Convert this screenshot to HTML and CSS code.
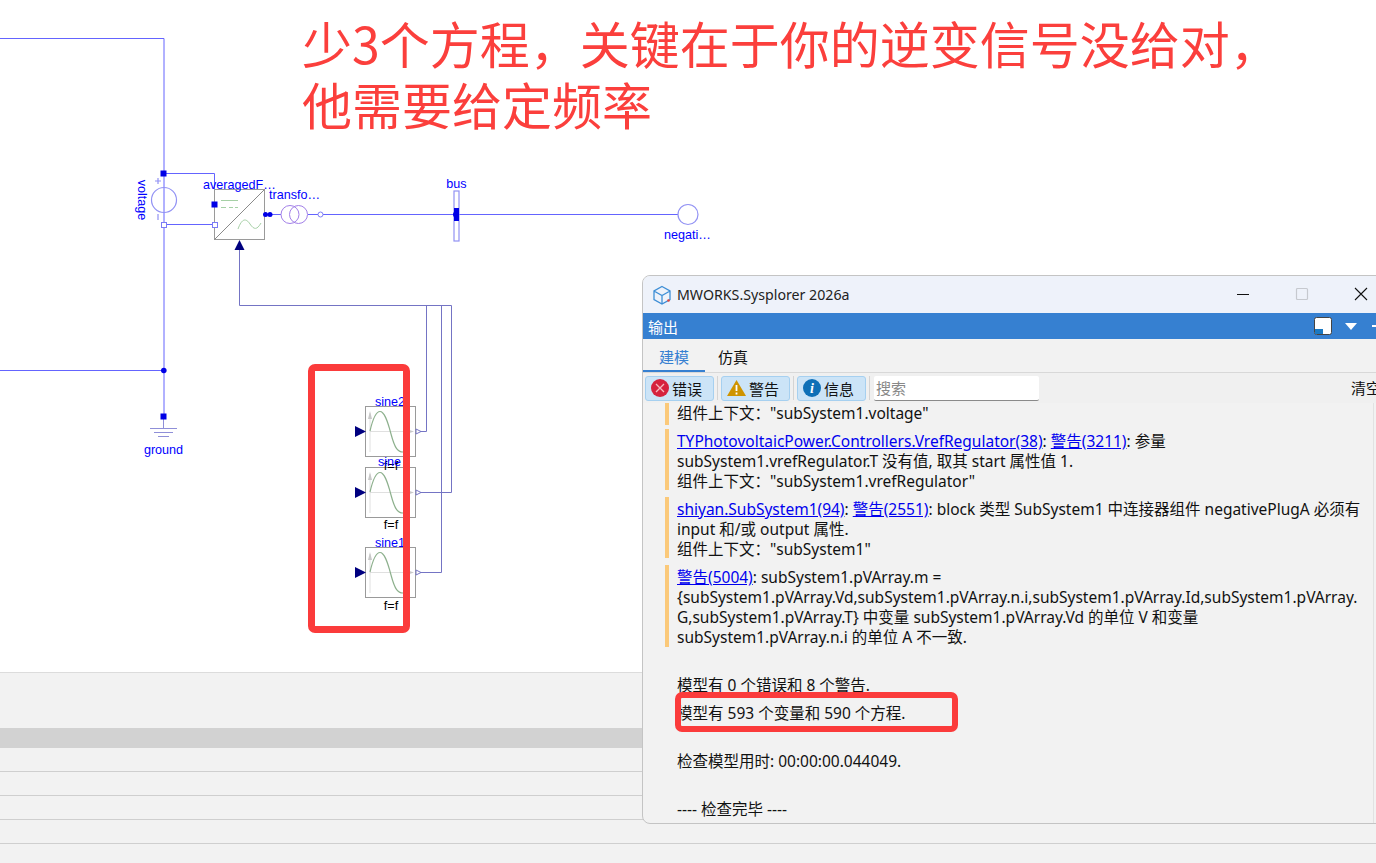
FILE: index.html
```
<!DOCTYPE html>
<html lang="zh-CN">
<head>
<meta charset="utf-8">
<title>MWORKS.Sysplorer</title>
<link rel="stylesheet" href="styles.css">
</head>
<body>
<main class="stage">
  <section class="canvas">
    <svg class="diagram" width="1376" height="672" viewBox="0 0 1376 672">
      <g class="wire">
        <path d="M0 38.500H164V416"/>
        <path d="M0 370.500H164"/>
        <path d="M164 173.500H214.500V204"/>
        <path d="M164 224.500H214.500"/>
        <path d="M265 214.500H281M308 214.500H318M322 214.500H678"/>
        <path d="M163.500 416V428M150 428.500H177M154 432.500H173M158 436.500H169" class="wire-light"/>
      </g>
      <g class="wire-signal">
        <path d="M239.500 250V305.500H451.500V492.500H418"/>
        <path d="M426.500 305V431.500H418"/>
        <path d="M441.500 305V572.500H418"/>
      </g>
      <circle class="sym" cx="164" cy="200" r="12.500"/>
      <path class="sym" d="M158 178v6M155 181h6M158 214v6"/>
      <rect class="dot" x="160.500" y="170.500" width="6" height="6"/>
      <circle class="dot" cx="163.800" cy="370.500" r="2.800"/>
      <rect class="dot" x="160.500" y="413.500" width="6" height="6"/>
      <rect class="port" x="161.500" y="222.500" width="5" height="5"/>

      <rect class="block" x="214.500" y="189.500" width="50" height="50"/>
      <path class="block-line" d="M214.500 239.500L264.500 189.500"/>
      <path class="green" d="M221 200.500H238M221 207.500H226M229 207.500H233M235 207.500H238"/>
      <path class="green" d="M238 229C242 218 246 218 250 224S257 230 261 223"/>
      <rect class="dot" x="211.500" y="201.500" width="6" height="6"/>
      <rect class="port" x="212.500" y="222.500" width="5" height="5"/>
      <path class="navy" d="M234.500 250L239.500 240L244.500 250Z"/>
      <circle class="dot" cx="265.500" cy="214.500" r="2.500"/>
      <circle class="dot" cx="270" cy="214.500" r="2.500"/>
      <circle class="coil" cx="290" cy="214.500" r="9"/>
      <circle class="coil" cx="298.500" cy="214.500" r="9"/>
      <circle class="port-round" cx="320.500" cy="214.500" r="2.500"/>

      <rect class="sym" x="454" y="191" width="5" height="50"/>
      <rect class="dot" x="454" y="208" width="5" height="13"/>
      <circle class="dot" cx="456" cy="214.500" r="3"/>
      <circle class="sym" cx="688" cy="214.500" r="10"/>

      <g class="sine" transform="translate(365 406)">
        <rect class="block" x="0.500" y="0.500" width="50" height="50"/>
        <path class="axis" d="M5 7V46M5 25.500H46"/>
        <path class="axis-head" d="M3 13L5 5L7 13ZM43 23.500L49 25.500L43 27.500Z"/>
        <path class="sine-curve" d="M5 25C8 12 11 5.500 15 5.500S22 13 26 28S33 46 38 46"/>
      </g>
      <g class="sine" transform="translate(365 467)">
        <rect class="block" x="0.500" y="0.500" width="50" height="50"/>
        <path class="axis" d="M5 7V46M5 25.500H46"/>
        <path class="axis-head" d="M3 13L5 5L7 13ZM43 23.500L49 25.500L43 27.500Z"/>
        <path class="sine-curve" d="M5 25C8 12 11 5.500 15 5.500S22 13 26 28S33 46 38 46"/>
      </g>
      <g class="sine" transform="translate(365 547)">
        <rect class="block" x="0.500" y="0.500" width="50" height="50"/>
        <path class="axis" d="M5 7V46M5 25.500H46"/>
        <path class="axis-head" d="M3 13L5 5L7 13ZM43 23.500L49 25.500L43 27.500Z"/>
        <path class="sine-curve" d="M5 25C8 12 11 5.500 15 5.500S22 13 26 28S33 46 38 46"/>
      </g>
      <path class="navy" d="M355 426L366 431.500L355 437Z"/>
      <path class="navy" d="M355 487L366 492.500L355 498Z"/>
      <path class="navy" d="M355 567L366 572.500L355 578Z"/>
      <path class="out" d="M416 429L421 431.500L416 434Z"/>
      <path class="out" d="M416 490L421 492.500L416 495Z"/>
      <path class="out" d="M416 570L421 572.500L416 575Z"/>

      <text class="lbl" x="163.500" y="454" text-anchor="middle">ground</text>
      <text class="lbl" transform="translate(138 200) rotate(90)" text-anchor="middle">voltage</text>
      <text class="lbl" x="203" y="189">averagedF…</text>
      <text class="lbl" x="269" y="199">transfo…</text>
      <text class="lbl" x="456.500" y="188" text-anchor="middle">bus</text>
      <text class="lbl" x="664" y="239">negati…</text>
      <text class="lbl" x="375" y="406">sine2</text>
      <text class="lbl-black" x="391" y="470" text-anchor="middle">f=f</text>
      <text class="lbl" x="378" y="466">sine</text>
      <text class="lbl-black" x="391" y="529" text-anchor="middle">f=f</text>
      <text class="lbl" x="375" y="547">sine1</text>
      <text class="lbl-black" x="391" y="610" text-anchor="middle">f=f</text>
    </svg>
    <p class="note">少3个方程，关键在于你的逆变信号没给对，<br>他需要给定频率</p>
    <div class="mark mark-sines"></div>
  </section>

  <section class="lower">
    <div class="band"></div>
    <div class="row"></div>
    <div class="row"></div>
    <div class="row"></div>
    <div class="row"></div>
  </section>

  <section class="window">
    <header class="titlebar">
      <svg class="logo" width="20" height="20" viewBox="0 0 20 20">
        <path d="M10 1.500L18 6V14.500L10 19L2 14.500V6ZM2 6L10 10.500L18 6M10 10.500V19"/>
        <circle cx="16.500" cy="15.500" r="1.300"/>
      </svg>
      <span class="app-name">MWORKS.Sysplorer 2026a</span>
      <span class="win-controls">
        <svg width="14" height="14" viewBox="0 0 14 14"><path class="ctl" d="M1 7.500H13"/></svg>
        <svg width="14" height="14" viewBox="0 0 14 14"><rect class="ctl-off" x="1.500" y="1.500" width="11" height="11" rx="1"/></svg>
        <svg width="14" height="14" viewBox="0 0 14 14"><path class="ctl" d="M1 1L13 13M13 1L1 13"/></svg>
      </span>
    </header>
    <div class="panelbar">
      <span>输出</span>
      <span class="panel-tools">
        <svg width="18" height="18" viewBox="0 0 18 18"><rect class="restore" x="0.500" y="0.500" width="17" height="17" rx="2"/><rect class="restore-in" x="1" y="12" width="8" height="5"/></svg>
        <svg width="12" height="7" viewBox="0 0 12 7"><path class="caret" d="M0 0H12L6 7Z"/></svg>
        <span class="panel-dash"></span>
      </span>
    </div>
    <nav class="tabs">
      <span class="tab tab-on">建模</span>
      <span class="tab">仿真</span>
    </nav>
    <div class="toolbar">
      <span class="tool">
        <svg width="18" height="18" viewBox="0 0 18 18"><circle class="i-err" cx="9" cy="9" r="9"/><path class="i-x" d="M5 5L13 13M13 5L5 13"/></svg>错误</span>
      <i class="sep"></i>
      <span class="tool">
        <svg width="19" height="18" viewBox="0 0 19 18"><path class="i-warn" d="M9.500 1L19 17H0Z"/><path class="i-bang" d="M9.500 6V12M9.500 13.500V15.500"/></svg>警告</span>
      <i class="sep"></i>
      <span class="tool">
        <svg width="18" height="18" viewBox="0 0 18 18"><circle class="i-info" cx="9" cy="9" r="9"/><text class="i-i" x="9" y="14" text-anchor="middle">i</text></svg>信息</span>
      <i class="sep"></i>
      <span class="search">搜索</span>
      <span class="clear">清空</span>
    </div>
    <div class="log">
      <div class="entry entry-first">组件上下文："subSystem1.voltage"</div>
      <div class="entry"><a>TYPhotovoltaicPower.Controllers.VrefRegulator(38)</a>: <a>警告(3211)</a>: 参量<br>subSystem1.vrefRegulator.T 没有值, 取其 start 属性值 1.<br>组件上下文："subSystem1.vrefRegulator"</div>
      <div class="entry"><a>shiyan.SubSystem1(94)</a>: <a>警告(2551)</a>: block 类型 SubSystem1 中连接器组件 negativePlugA 必须有<br>input 和/或 output 属性.<br>组件上下文："subSystem1"</div>
      <div class="entry"><a>警告(5004)</a>: subSystem1.pVArray.m =<br>{subSystem1.pVArray.Vd,subSystem1.pVArray.n.i,subSystem1.pVArray.Id,subSystem1.pVArray.<br>G,subSystem1.pVArray.T} 中变量 subSystem1.pVArray.Vd 的单位 V 和变量<br>subSystem1.pVArray.n.i 的单位 A 不一致.</div>
      <p class="msg msg-a">模型有 0 个错误和 8 个警告.</p>
      <p class="msg msg-b">模型有 593 个变量和 590 个方程.</p>
      <p class="msg msg-c">检查模型用时: 00:00:00.044049.</p>
      <p class="msg msg-c">---- 检查完毕 ----</p>
    </div>
    <div class="scroll-edge"></div>
    <div class="mark mark-eq"></div>
  </section>
</main>
</body>
</html>
```
FILE: styles.css
```
* { box-sizing: border-box; }
html, body { margin: 0; padding: 0; height: 863px; overflow: hidden; background: #f2f2f2; }
body { font-family: "Noto Sans", "Noto Sans CJK SC", sans-serif; }

.stage { position: relative; width: 1376px; height: 863px; overflow: hidden; }

.canvas { position: relative; height: 673px; background: #fff; border-bottom: 1px solid #dcdcdc; }
.diagram { display: block; }

.wire path { fill: none; stroke: #6464ff; stroke-width: 1; }
.wire .wire-light { stroke: #8f8fd8; stroke-width: 1; }
.wire-signal path { fill: none; stroke: #7474c4; stroke-width: 1; }
.sym { fill: none; stroke: #9292f4; stroke-width: 1.200; }
.dot { fill: #0000e6; }
.port { fill: #fff; stroke: #7c7cf6; stroke-width: 1; }
.port-round { fill: #fff; stroke: #7c7cf6; stroke-width: 1; }
.block { fill: #fff; stroke: #9a9a9a; stroke-width: 1; }
.block-line { fill: none; stroke: #8a8a8a; stroke-width: 1; }
.green { fill: none; stroke: #a6d0a6; stroke-width: 1; }
.navy { fill: #00007f; }
.coil { fill: none; stroke: #a27fe8; stroke-width: 1; }
.axis { fill: none; stroke: #e0e0e0; stroke-width: 1; }
.axis-head { fill: #c8c8c8; }
.sine-curve { fill: none; stroke: #8db08d; stroke-width: 1.200; }
.out { fill: #fff; stroke: #7474c4; stroke-width: 1; }
.lbl { font: 12.600px "Liberation Sans", Arial, sans-serif; fill: #0000ff; }
.lbl-black { font: 12.600px "Liberation Sans", Arial, sans-serif; fill: #000; }

.note {
  position: absolute; left: 302px; top: 12px; margin: 0;
  font: 400 50px/61px "Noto Sans CJK SC", sans-serif;
  color: #fb3f3c; white-space: nowrap;
}
.mark { position: absolute; border: 7px solid #fb3b3b; border-radius: 7px; }
.mark-sines { left: 308px; top: 364px; width: 102px; height: 269px; }

.lower { padding-top: 55px; }
.band { height: 20px; background: #d2d2d2; }
.row { height: 24px; border-bottom: 1px solid #cfcfcf; }

.window {
  position: absolute; left: 642px; top: 275px; width: 760px; height: 549px;
  background: #f2f2f2; border: 1px solid #c4c4c4; border-radius: 8px;
  overflow: hidden; display: flex; flex-direction: column;
  font-size: 15px; color: #111;
}
.titlebar { flex: 0 0 37px; background: #eef2fa; display: flex; align-items: center; padding-left: 9px; }
.logo { margin-right: 5px; }
.logo path { fill: none; stroke: #3f8fd6; stroke-width: 1.300; }
.logo circle { fill: #e2483d; }
.app-name { font-size: 14.200px; color: #222; }
.win-controls { position: absolute; left: 593px; top: 11px; width: 132px; display: flex; justify-content: space-between; }
.ctl { fill: none; stroke: #111; stroke-width: 1.100; }
.ctl-off { fill: none; stroke: #c6c9cf; stroke-width: 1.200; }

.panelbar { flex: 0 0 26px; background: #3680d1; color: #fff; display: flex; align-items: center; padding-left: 5px; position: relative; }
.panel-tools { position: absolute; left: 671px; top: 4px; display: flex; align-items: center; gap: 13px; }
.restore { fill: #fff; stroke: #444; stroke-width: 1; }
.restore-in { fill: #1a78c2; }
.caret { fill: #fff; }
.panel-dash { width: 10px; height: 1.500px; background: #fff; margin-left: 2px; }

.tabs { flex: 0 0 34px; display: flex; border-bottom: 1px solid #d8d8d8; }
.tab { width: 62px; text-align: center; line-height: 36px; color: #111; height: 33px; }
.tab-on { color: #3680d1; border-bottom: 2px solid #3680d1; }
.tab + .tab { width: 60px; margin-left: -2px; }

.toolbar { flex: 0 0 30px; background: #f0f0f0; display: flex; align-items: center; padding: 0 0 0 2px; position: relative; }
.tool {
  width: 69px; height: 25px; background: #cce4f7; border: 1px solid #a6d0f0; border-radius: 3px;
  display: flex; align-items: center; gap: 3px; padding-left: 5px; font-size: 15px; color: #111;
}
.sep { width: 1px; height: 24px; background: #d4d4d4; margin: 0 3px; }
.search {
  width: 165px; height: 25px; background: #fff; border-bottom: 1px solid #8a8a8a;
  padding-left: 2px; line-height: 25px; color: #888; margin-left: 1px; border-radius: 2px;
}
.clear { position: absolute; left: 708px; top: 5px; line-height: 20px; }
.i-err { fill: #d6223e; }
.i-x { fill: none; stroke: #f7b8c0; stroke-width: 1.300; }
.i-warn { fill: #cf9400; }
.i-bang { fill: none; stroke: #fff; stroke-width: 1.800; }
.i-info { fill: #0f70b7; }
.i-i { font: italic 700 14px "Liberation Serif", serif; fill: #fff; }

.log { flex: 1 1 auto; padding: 0 0 0 22px; white-space: nowrap; line-height: 20px; font-size: 15.500px; color: #111; }
.log a { color: #0000ee; text-decoration: underline; }
.entry { border-left: 4px solid #fbc97a; padding: 2px 0 0 8px; margin-bottom: 7px; height: 61px; }
.entry-first { height: 22px; padding-top: 0; margin-bottom: 4px; }
.entry:nth-child(4) { height: 82px; }
.msg { margin: 0 0 0 12px; }
.msg-a { margin-top: 28px; }
.msg-b { margin-top: 8px; }
.msg-c { margin-top: 28px; }
.scroll-edge { position: absolute; left: 730px; top: 127px; bottom: 0; width: 1px; background: #e2e2e2; }
.mark-eq { left: 32px; top: 416px; width: 283px; height: 40px; border-width: 6px; }
```
